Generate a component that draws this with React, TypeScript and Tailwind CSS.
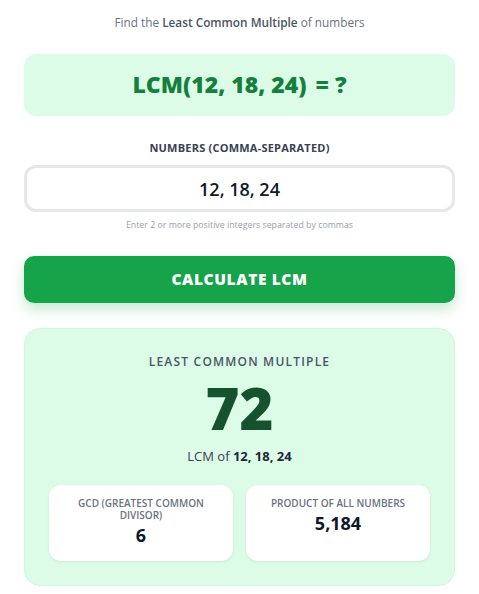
export default function App() {
  return (
    <div className="min-h-[594px] bg-white px-6 pt-[14px] font-['Open_Sans','Noto_Sans',sans-serif]">
      <p className="text-center text-[11.8px] text-gray-500">
        Find the <span className="font-semibold text-gray-600">Least Common Multiple</span> of numbers
      </p>

      <div className="mt-[22px] flex h-[62px] items-center justify-center rounded-xl bg-[#dcfce7]">
        <span className="text-[23px] font-extrabold text-[#15803d]">
          LCM(12, 18, 24) <span className="ml-[3px]">= ?</span>
        </span>
      </div>

      <div className="mt-[24px] text-center text-[11px] font-bold tracking-[0.02em] text-gray-700">
        NUMBERS (COMMA-SEPARATED)
      </div>
      <div className="mt-[9px] flex h-[47px] items-center justify-center rounded-xl border-[3px] border-[#e5e7eb] bg-white">
        <span className="pt-[2px] text-[18px] font-semibold text-gray-900">12, 18, 24</span>
      </div>
      <p className="mt-[7px] text-center text-[8.8px] text-gray-400">
        Enter 2 or more positive integers separated by commas
      </p>

      <button className="mt-[24px] flex h-[47px] w-full items-center justify-center rounded-[10px] bg-[#16a34a] text-[15.5px] font-extrabold tracking-[0.04em] text-white shadow-[0_6px_14px_rgba(22,163,74,0.25)]">
        CALCULATE LCM
      </button>

      <div className="mt-[25px] rounded-2xl border border-[#d1f7dc] bg-[#dcfce7] px-6 pb-6 pt-[24px] text-center">
        <div className="text-[12px] font-semibold tracking-[0.1em] text-gray-600">
          LEAST COMMON MULTIPLE
        </div>
        <div className="mt-[1px] text-[58px] font-extrabold leading-[72px] text-[#14532d]">72</div>
        <div className="mt-[3px] text-[13px] text-gray-700">
          LCM of <span className="font-bold text-gray-800">12, 18, 24</span>
        </div>
        <div className="mt-[18px] grid grid-cols-2 gap-[13px]">
          <div className="flex h-[76px] flex-col items-center rounded-xl bg-white px-4 pt-[12px] shadow-[0_1px_3px_rgba(0,0,0,0.08)]">
            <div className="text-[10px] font-semibold leading-[12px] text-gray-500">
              GCD (GREATEST COMMON DIVISOR)
            </div>
            <div className="mt-[2px] text-[18px] font-bold leading-[24px] text-gray-900">6</div>
          </div>
          <div className="flex h-[76px] flex-col items-center rounded-xl bg-white px-4 pt-[12px] shadow-[0_1px_3px_rgba(0,0,0,0.08)]">
            <div className="text-[10px] font-semibold leading-[12px] text-gray-500">
              PRODUCT OF ALL NUMBERS
            </div>
            <div className="mt-[2px] text-[18px] font-bold leading-[24px] text-gray-900">5,184</div>
          </div>
        </div>
      </div>
    </div>
  );
}
